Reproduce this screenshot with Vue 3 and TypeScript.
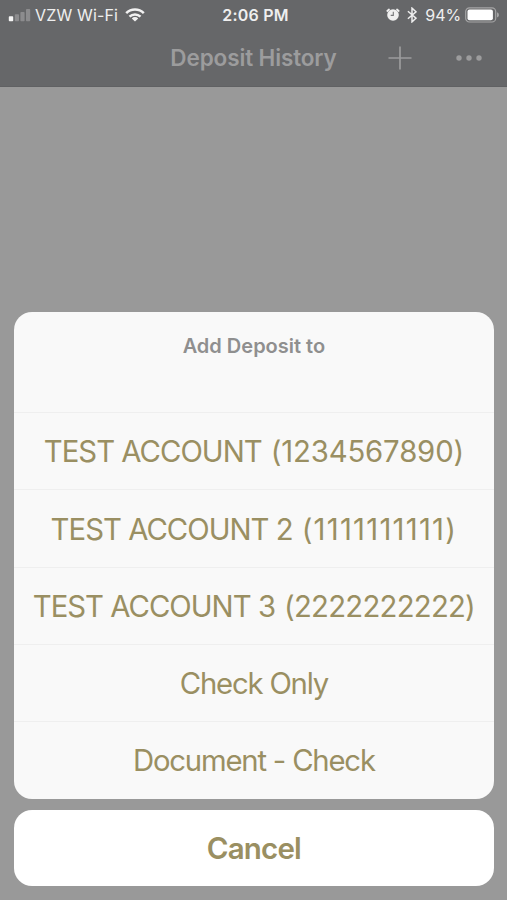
<script setup lang="ts">
interface Action {
  id: number
  name: string
  number?: string
  tracking?: string
}

const title = 'Add Deposit to'
const actions: Action[] = [
  { id: 1, name: 'TEST ACCOUNT', number: '(1234567890)', tracking: '-0.15px' },
  { id: 2, name: 'TEST ACCOUNT 2', number: '(1111111111)', tracking: '1.25px' },
  { id: 3, name: 'TEST ACCOUNT 3', number: '(2222222222)', tracking: '-0.75px' },
  { id: 4, name: 'Check Only' },
  { id: 5, name: 'Document - Check' },
]
</script>

<template>
  <div class="screen">
    <header class="top">
      <div class="status">
        <div class="status-left">
          <svg class="signal" width="24" height="14" viewBox="0 0 24 14">
            <rect x="0.8" y="8.3" width="4.4" height="5" rx="0.8" fill="#f6f6f6" />
            <rect x="6.8" y="6.3" width="4.2" height="7" rx="0.8" fill="#8c8c8e" />
            <rect x="12.4" y="3.9" width="4.2" height="9.4" rx="0.8" fill="#8c8c8e" />
            <rect x="18" y="0.9" width="4.2" height="12.4" rx="0.8" fill="#8c8c8e" />
          </svg>
          <span class="carrier">VZW Wi-Fi</span>
          <svg class="wifi" width="20" height="14" viewBox="0 0 20 14">
            <g fill="none" stroke="#f2f2f2" stroke-width="2.5">
              <path d="M1.2 5.2A12.6 12.6 0 0 1 18.8 5.2" />
              <path d="M4.5 8.6A8 8 0 0 1 15.5 8.6" />
            </g>
            <path d="M10 13.6L6.8 10.4A4.6 4.6 0 0 1 13.2 10.4Z" fill="#f2f2f2" />
          </svg>
        </div>
        <span class="time">2:06 PM</span>
        <div class="status-right">
          <svg class="alarm" width="14" height="14" viewBox="0 0 14 14">
            <circle cx="7" cy="7" r="5.8" fill="#f0f0f0" />
            <path d="M1.3 3L3 1.5M12.7 3L11 1.5" stroke="#f0f0f0" stroke-width="1.8" stroke-linecap="round" />
            <path d="M7.3 3.8V7.4H4.7" fill="none" stroke="#77787a" stroke-width="1.1" />
          </svg>
          <svg class="bluetooth" width="10" height="16" viewBox="0 0 10 16">
            <path d="M0.9 4.3L9 11.2L5 14.9V1.1L9 4.8L0.9 11.7" fill="none" stroke="#ededed" stroke-width="1.5" />
          </svg>
          <span class="percent">94%</span>
          <svg class="battery" width="35" height="16" viewBox="0 0 35 16">
            <rect x="0.7" y="0.8" width="30" height="14.2" rx="3.8" fill="none" stroke="#a5a5a6" stroke-width="1.2" />
            <rect x="2.5" y="2.6" width="25.4" height="10.6" rx="2" fill="#fff" />
            <path d="M32 5.2Q34 6 34 7.9T32 10.6Z" fill="#a5a5a6" />
          </svg>
        </div>
      </div>
      <div class="nav">
        <h1>Deposit History</h1>
        <div class="nav-actions">
          <svg width="24" height="24" viewBox="0 0 24 24">
            <path d="M12 0.5V23.5M0.5 12H23.5" stroke="#9c9c9d" stroke-width="1.7" />
          </svg>
          <svg width="28" height="8" viewBox="0 0 28 8">
            <g fill="#9c9c9d">
              <circle cx="4" cy="4" r="2.7" />
              <circle cx="14" cy="4" r="2.7" />
              <circle cx="24" cy="4" r="2.7" />
            </g>
          </svg>
        </div>
      </div>
    </header>
    <main class="content">
      <section class="sheet">
        <h2>{{ title }}</h2>
        <button v-for="action in actions" :key="action.id" class="action">
          <span :class="action.number ? 'account' : 'name'">{{ action.name }}</span>
          <span v-if="action.number" :style="{ letterSpacing: action.tracking }">{{ action.number }}</span>
        </button>
      </section>
      <button class="cancel">Cancel</button>
    </main>
  </div>
</template>

<style>
body {
  margin: 0;
}
</style>

<style scoped>
.screen {
  box-sizing: border-box;
  width: 507px;
  height: 900px;
  display: flex;
  flex-direction: column;
  overflow: hidden;
  background: #999;
  font-family: Inter, "Liberation Sans", sans-serif;
}
.top {
  flex: none;
  box-sizing: border-box;
  height: 87px;
  background: #666769;
  border-bottom: 1px solid #606163;
}
.status {
  height: 30px;
  display: grid;
  grid-template-columns: 1fr auto 1fr;
  align-items: center;
  color: #efefef;
  font-size: 16px;
  line-height: 30px;
}
.status-left,
.status-right {
  display: flex;
  align-items: center;
}
.status-left {
  padding-left: 8px;
}
.carrier {
  margin-left: 3px;
  letter-spacing: 0.15px;
}
.wifi {
  margin-left: 7px;
}
.time {
  font-weight: 600;
  letter-spacing: 0.2px;
  margin-left: 4px;
}
.status-right {
  justify-content: flex-end;
  padding-right: 7px;
}
.bluetooth {
  margin-left: 7px;
}
.percent {
  margin-left: 8px;
  letter-spacing: -0.1px;
}
.battery {
  margin-left: 4px;
}
.nav {
  height: 56px;
  display: grid;
  grid-template-columns: 1fr auto 1fr;
  align-items: center;
  color: #9c9c9d;
}
h1 {
  grid-column: 2;
  margin: 0;
  font-size: 22.5px;
  line-height: 56px;
  font-weight: 600;
  letter-spacing: -0.12px;
}
.nav-actions {
  display: flex;
  justify-content: flex-end;
  align-items: center;
  gap: 42.5px;
  padding-right: 24.5px;
}
.content {
  flex: 1;
  display: flex;
  flex-direction: column;
  justify-content: flex-end;
  gap: 11px;
  padding: 0 13.5px 14px 14.3px;
}
.sheet {
  overflow: hidden;
  border-radius: 18px;
  background: #f9f9f9;
}
h2 {
  box-sizing: border-box;
  height: 100px;
  margin: 0;
  padding-top: 20px;
  text-align: center;
  font-size: 20px;
  line-height: 28px;
  font-weight: 600;
  color: #8f8f8f;
}
button {
  display: flex;
  align-items: center;
  justify-content: center;
  box-sizing: border-box;
  width: 100%;
  padding: 0;
  border: 0;
  font-family: inherit;
  color: #9a8f62;
  white-space: nowrap;
}
.action {
  gap: 9px;
  height: 77.3px;
  padding-top: 1.2px;
  border-top: 1px solid #efefef;
  background: transparent;
  font-size: 29.3px;
}
.account {
  letter-spacing: -0.98px;
}
.name {
  letter-spacing: -1.2px;
}
.cancel {
  height: 76.5px;
  border-radius: 18px;
  background: #fff;
  font-size: 29.5px;
  font-weight: 600;
  letter-spacing: -0.8px;
}
</style>
